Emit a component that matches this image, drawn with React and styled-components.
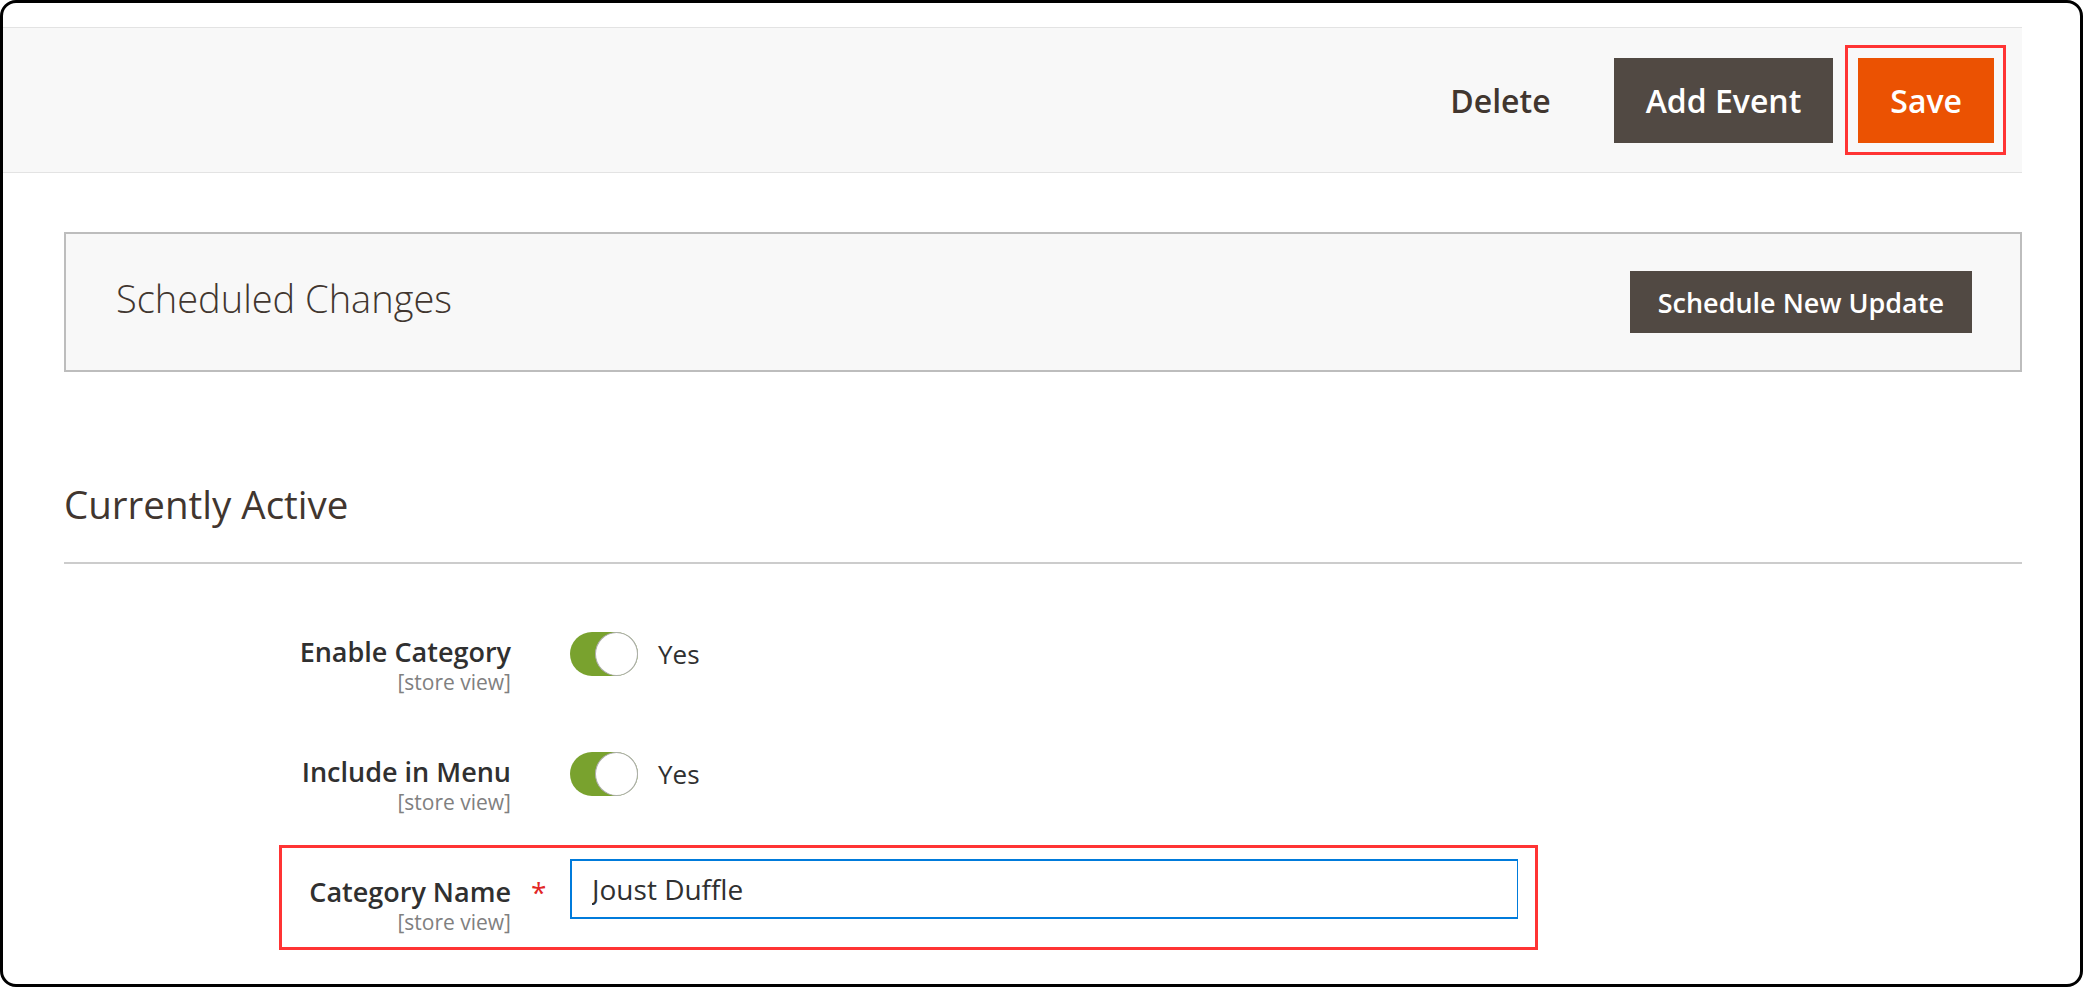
import React from 'react';
import styled, { createGlobalStyle } from 'styled-components';

const GlobalStyle = createGlobalStyle`
  html, body {
    margin: 0;
    padding: 0;
    background: #ffffff;
  }
  body {
    font-family: 'Open Sans', 'DejaVu Sans', sans-serif;
    color: #303030;
  }
  * {
    box-sizing: border-box;
  }
`;

const Frame = styled.div`
  width: 2083px;
  height: 987px;
  border: 3px solid #000000;
  border-radius: 16px;
  overflow: hidden;
  background: #ffffff;
`;

const Page = styled.div`
  margin-right: 58px;
  padding-top: 24px;
`;

const ActionsBar = styled.div`
  height: 146px;
  background: #f8f8f8;
  border-top: 1px solid #e3e3e3;
  border-bottom: 1px solid #e3e3e3;
  display: flex;
  align-items: center;
  justify-content: flex-end;
  gap: 25px;
  padding-right: 28px;
`;

const ActionButton = styled.button`
  position: relative;
  height: 85px;
  padding: 0 ${props => (props.$kind === 'link' ? '38px 0 0' : '32px')};
  border: none;
  border-radius: 0;
  font-family: 'Open Sans', sans-serif;
  font-size: 32px;
  font-weight: 600;
  cursor: pointer;
  color: ${props => (props.$kind === 'link' ? '#41362f' : '#ffffff')};
  background: ${props =>
    props.$kind === 'primary' ? '#eb5202' : props.$kind === 'secondary' ? '#514943' : 'transparent'};

  ${props =>
    props.$marked &&
    `
    &::after {
      content: '';
      position: absolute;
      top: -13px;
      bottom: -12px;
      left: -13px;
      right: -12px;
      border: 3px solid #ff3434;
      pointer-events: none;
    }
  `}
`;

const Content = styled.div`
  margin-left: 61px;
`;

const ScheduleBox = styled.div`
  margin-top: 59px;
  height: 140px;
  background: #f8f8f8;
  border: 2px solid #bdbdbd;
  display: flex;
  align-items: center;
  justify-content: space-between;
  padding: 0 48px 0 50px;
`;

const ScheduleTitle = styled.h2`
  margin: 0 0 8px;
  font-size: 38px;
  font-weight: 300;
  color: #41362f;
  line-height: 44px;
`;

const SmallButton = styled.button`
  height: 62px;
  padding: 0 28px;
  border: none;
  background: #514943;
  color: #ffffff;
  font-family: 'Open Sans', sans-serif;
  font-size: 27px;
  font-weight: 600;
  cursor: pointer;
`;

const SectionTitle = styled.h2`
  margin: 110px 0 0;
  padding-bottom: 36px;
  border-bottom: 2px solid #cccccc;
  font-size: 38.5px;
  font-weight: 400;
  line-height: 44px;
  color: #41362f;
`;

const Fieldset = styled.div`
  padding-top: 55px;
  padding-left: 218px;
`;

const Field = styled.div`
  position: relative;
  width: 1236px;
  height: 75px;
  margin-bottom: 45px;
  display: grid;
  grid-template-columns: 229px 59px 948px;
  align-items: start;

  ${props =>
    props.$marked &&
    `
    &::before {
      content: '';
      position: absolute;
      top: -14px;
      bottom: -16px;
      left: -3px;
      right: -20px;
      border: 3px solid #ff3434;
      pointer-events: none;
    }
  `}
`;

const Label = styled.div`
  padding-top: 15px;
  text-align: right;
`;

const LabelText = styled.div`
  font-size: 27px;
  font-weight: 600;
  line-height: 36px;
  color: #303030;
`;

const Scope = styled.div`
  font-size: 21px;
  line-height: 24px;
  color: #808080;
`;

const Required = styled.div`
  padding: 15px 0 0 20px;
  font-size: 28px;
  line-height: 36px;
  color: #e22626;
`;

const Control = styled.div`
  display: flex;
  align-items: center;
  gap: 20px;
  margin-top: ${props => props.$offset || 0}px;
`;

const Switch = styled.div`
  width: 68px;
  height: 44px;
  border-radius: 22px;
  background: #79a22e;
  display: flex;
  justify-content: flex-end;
`;

const Knob = styled.div`
  width: 43px;
  height: 44px;
  border-radius: 50%;
  background: #ffffff;
  border: 1px solid #adadad;
`;

const SwitchText = styled.span`
  font-size: 26px;
  line-height: 36px;
  color: #303030;
`;

const TextInput = styled.input`
  width: 948px;
  height: 60px;
  border: 2px solid #007bdb;
  border-right-width: 1px;
  padding: 0 20px;
  font-family: 'Open Sans', sans-serif;
  font-size: 28px;
  color: #303030;
  outline: none;
  background: #ffffff;
`;

const ToggleField = ({ label }) => (
  <Field>
    <Label>
      <LabelText>{label}</LabelText>
      <Scope>[store view]</Scope>
    </Label>
    <div />
    <Control $offset={13}>
      <Switch>
        <Knob />
      </Switch>
      <SwitchText>Yes</SwitchText>
    </Control>
  </Field>
);

export default function App() {
  return (
    <>
      <GlobalStyle />
      <Frame>
        <Page>
          <ActionsBar>
            <ActionButton $kind="link">Delete</ActionButton>
            <ActionButton $kind="secondary">Add Event</ActionButton>
            <ActionButton $kind="primary" $marked>
              Save
            </ActionButton>
          </ActionsBar>

          <Content>
            <ScheduleBox>
              <ScheduleTitle>Scheduled Changes</ScheduleTitle>
              <SmallButton>Schedule New Update</SmallButton>
            </ScheduleBox>

            <SectionTitle>Currently Active</SectionTitle>

            <Fieldset>
              <ToggleField label="Enable Category" />
              <ToggleField label="Include in Menu" />
              <Field $marked>
                <Label>
                  <LabelText>Category Name</LabelText>
                  <Scope>[store view]</Scope>
                </Label>
                <Required>*</Required>
                <Control>
                  <TextInput defaultValue="Joust Duffle" />
                </Control>
              </Field>
            </Fieldset>
          </Content>
        </Page>
      </Frame>
    </>
  );
}
